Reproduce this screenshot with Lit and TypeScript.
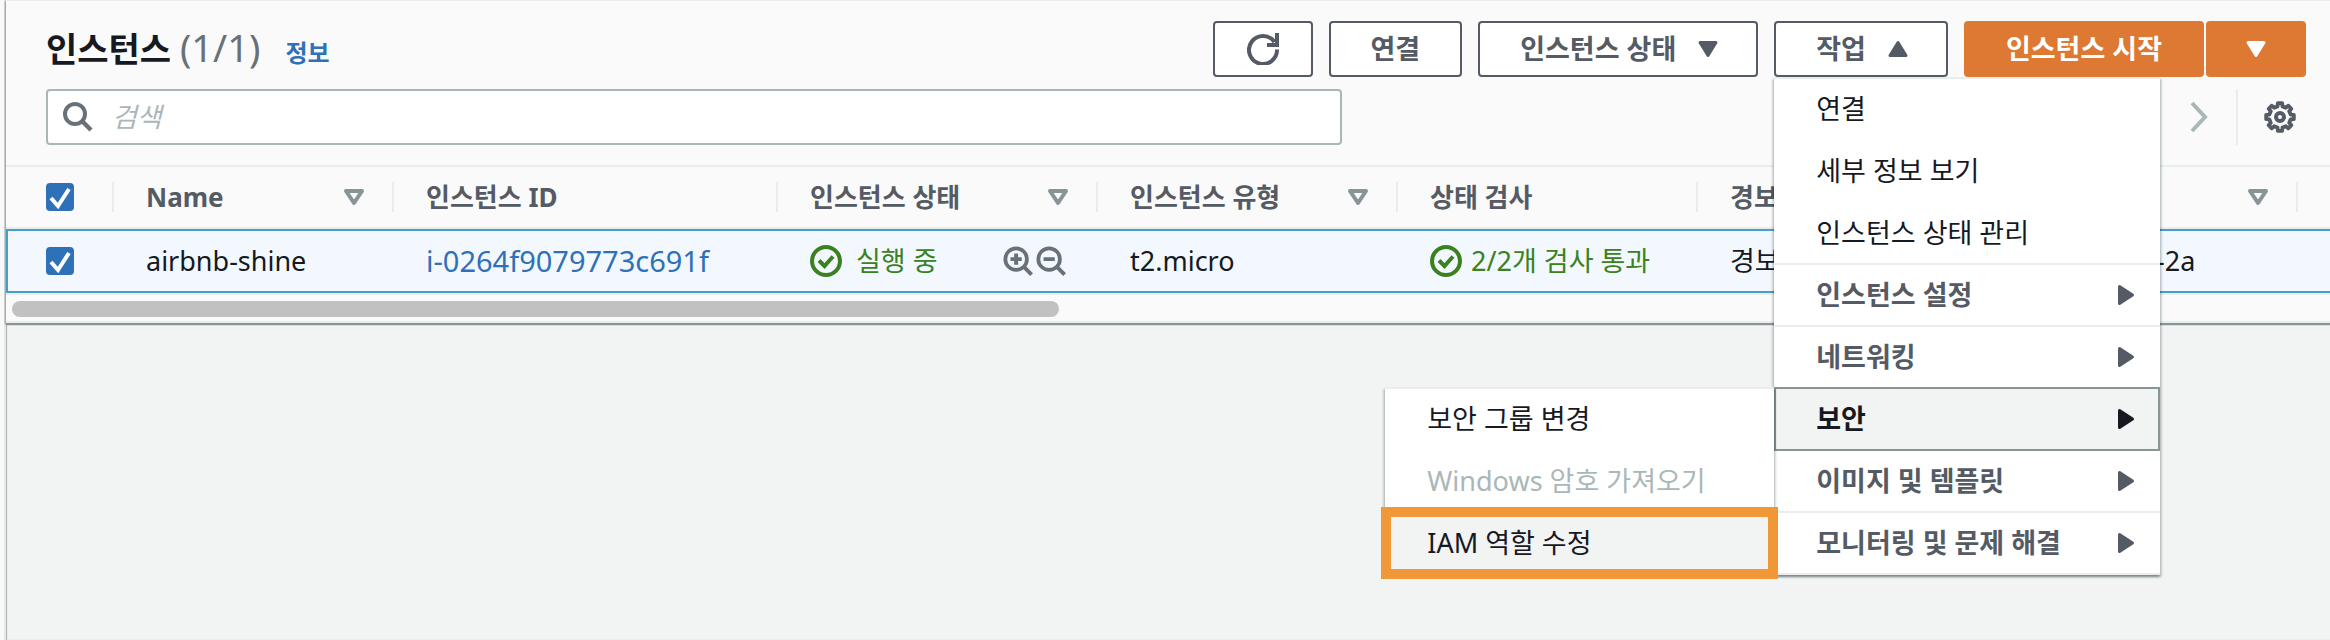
import { LitElement, html, svg, css, nothing } from "lit";
import { customElement, property, state } from "lit/decorators.js";
import { classMap } from "lit/directives/class-map.js";

interface MenuEntry {
  label: string;
  group?: boolean;
  disabled?: boolean;
  hovered?: boolean;
  children?: MenuEntry[];
}

const ACTIONS: MenuEntry[] = [
  { label: "연결" },
  { label: "세부 정보 보기" },
  { label: "인스턴스 상태 관리" },
  { label: "인스턴스 설정", group: true },
  { label: "네트워킹", group: true },
  {
    label: "보안",
    group: true,
    children: [
      { label: "보안 그룹 변경" },
      { label: "Windows 암호 가져오기", disabled: true },
      { label: "IAM 역할 수정", hovered: true },
    ],
  },
  { label: "이미지 및 템플릿", group: true },
  { label: "모니터링 및 문제 해결", group: true },
];

const COLUMNS = [
  { key: "name", label: "Name", sortable: true },
  { key: "id", label: "인스턴스 ID", sortable: false },
  { key: "state", label: "인스턴스 상태", sortable: true },
  { key: "type", label: "인스턴스 유형", sortable: true },
  { key: "check", label: "상태 검사", sortable: false },
  { key: "alarm", label: "경보 상태", sortable: false },
  { key: "zone", label: "가용 영역", sortable: true },
  { key: "dns", label: "", sortable: false },
];

/** Outline of an eight-toothed cog centred on 16,16. */
function cogPath(): string {
  const points: string[] = [];
  for (let i = 0; i < 8; i++) {
    const steps: [number, number][] = [
      [-13, 10.9],
      [-9, 14],
      [9, 14],
      [13, 10.9],
    ];
    for (const [offset, radius] of steps) {
      const a = ((i * 45 + offset - 90) * Math.PI) / 180;
      points.push(`${(16 + radius * Math.cos(a)).toFixed(2)} ${(16 + radius * Math.sin(a)).toFixed(2)}`);
    }
  }
  return `M${points.join("L")}Z`;
}

const icons = {
  refresh: svg`<path d="M30 16.500A14 14 0 1 1 27.500 9" fill="none" stroke="currentColor" stroke-width="4"/><path d="M30 0v12H20" fill="none" stroke="currentColor" stroke-width="4"/>`,
  search: svg`<circle cx="13" cy="13" r="10" fill="none" stroke="currentColor" stroke-width="4"/><path d="M20 20l9 9" stroke="currentColor" stroke-width="4.4"/>`,
  zoomIn: svg`<circle cx="14" cy="14" r="11.5" fill="none" stroke="currentColor" stroke-width="4"/><path d="M22 22l8.500 8.500M8 14h12M14 8v12" stroke="currentColor" stroke-width="4.2"/>`,
  zoomOut: svg`<circle cx="14" cy="14" r="11.500" fill="none" stroke="currentColor" stroke-width="4"/><path d="M22 22l8.500 8.500M8 14h12" stroke="currentColor" stroke-width="4.2"/>`,
  ok: svg`<circle cx="16" cy="16" r="14" fill="none" stroke="currentColor" stroke-width="4"/><path d="M9 15.500l5.500 5.500 8.500-9.500" fill="none" stroke="currentColor" stroke-width="4"/>`,
  next: svg`<path d="M9 2l13 14-13 14" fill="none" stroke="currentColor" stroke-width="4"/>`,
  cog: svg`<path d="${cogPath()}" fill="none" stroke="currentColor" stroke-width="3.8" stroke-linejoin="round"/><circle cx="16" cy="16" r="4" fill="none" stroke="currentColor" stroke-width="4"/>`,
  down: svg`<path d="M8 9.500h16l-8 13z" fill="currentColor" stroke="currentColor" stroke-width="3" stroke-linejoin="round"/>`,
  up: svg`<path d="M8 22.500h16l-8-13z" fill="currentColor" stroke="currentColor" stroke-width="3" stroke-linejoin="round"/>`,
  right: svg`<path d="M9.500 7.500v17l13-8.500z" fill="currentColor" stroke="currentColor" stroke-width="3" stroke-linejoin="round"/>`,
  sort: svg`<path d="M8 10h16l-8 12z" fill="none" stroke="currentColor" stroke-width="4" stroke-linejoin="round"/>`,
  tick: svg`<path d="M5 15l7 8L23 6" fill="none" stroke="#fff" stroke-width="4"/>`,
};

const icon = (shape: unknown, size = "", box = "0 0 32 32") =>
  html`<svg class="icon ${size}" viewBox=${box} aria-hidden="true">${shape}</svg>`;

const base = css`
  :host {
    display: block;
    box-sizing: border-box;
  }
  *,
  *::before,
  *::after {
    box-sizing: border-box;
  }
  .icon {
    display: block;
    flex: none;
    width: 32px;
    height: 32px;
  }
  button {
    font: inherit;
    color: inherit;
    cursor: pointer;
  }
  a {
    color: #2f71b8;
    text-decoration: none;
  }
`;

@customElement("action-menu")
class ActionMenu extends LitElement {
  @property({ attribute: false }) items: MenuEntry[] = [];

  static styles = [
    base,
    css`
      .menu {
        list-style: none;
        margin: 0;
        padding: 0;
        background: #fff;
        box-shadow: 0 2px 2px 0 rgba(0, 28, 36, 0.3), 2px 2px 2px 0 rgba(0, 28, 36, 0.15),
          -2px 2px 2px 0 rgba(0, 28, 36, 0.15);
        border-top: 2px solid #eaeded;
        border-bottom: 2px solid #eaeded;
      }
      .item {
        position: relative;
        height: 64px;
        margin: -2px 0 0;
      }
      .item:last-child {
        margin-bottom: -2px;
      }
      .entry {
        display: flex;
        align-items: center;
        justify-content: space-between;
        width: 100%;
        height: 100%;
        padding: 0 18px 0 42px;
        border: 0 solid #eaeded;
        border-width: 2px 0;
        border-color: transparent;
        background: none;
        color: #16191f;
        font-size: 27px;
        line-height: 40px;
        text-align: left;
        white-space: nowrap;
      }
      .group {
        border-color: #eaeded;
        color: #545b64;
        font-weight: 700;
      }
      .open {
        z-index: 1;
      }
      .open > .entry {
        border: 2px solid #879596;
        padding: 0 16px 0 40px;
        background: #f2f3f3;
        color: #16191f;
      }
      .entry:disabled {
        color: #aab7b8;
      }
      .hovered > .entry {
        background: #f2f3f3;
        outline: 10px solid #f09837;
        outline-offset: -6px;
      }
      .submenu {
        position: absolute;
        top: 0;
        right: 100%;
        width: 389px;
      }
    `,
  ];

  render() {
    return html`<ul class="menu" role="menu">
      ${this.items.map(
        (entry) => html`<li
          class=${classMap({ item: true, open: !!entry.children, hovered: !!entry.hovered })}
          role="none"
        >
          <button
            class=${classMap({ entry: true, group: !!entry.group })}
            role="menuitem"
            type="button"
            ?disabled=${entry.disabled}
          >
            ${entry.label}${entry.group ? icon(icons.right) : nothing}
          </button>
          ${entry.children
            ? html`<action-menu class="submenu" .items=${entry.children}></action-menu>`
            : nothing}
        </li>`
      )}
    </ul>`;
  }
}

@customElement("check-box")
class CheckBox extends LitElement {
  @property() label = "";
  @state() private on = true;

  static styles = [
    base,
    css`
      .box {
        display: grid;
        width: 28px;
        height: 28px;
      }
      .input,
      .icon {
        grid-area: 1 / 1;
        width: 28px;
        height: 28px;
        margin: 0;
      }
      .input {
        appearance: none;
        border: 2px solid #879596;
        border-radius: 4px;
        background: #fff;
      }
      .input:checked {
        border-color: #2f71b8;
        background: #2f71b8;
      }
      .icon {
        pointer-events: none;
      }
    `,
  ];

  render() {
    return html`<label class="box">
      <input
        class="input"
        type="checkbox"
        aria-label=${this.label}
        .checked=${this.on}
        @change=${(e: Event) => (this.on = (e.target as HTMLInputElement).checked)}
      />
      ${this.on ? icon(icons.tick, "", "0 0 28 28") : nothing}
    </label>`;
  }
}

@customElement("app-root")
class AppRoot extends LitElement {
  @state() private menuOpen = true;

  static styles = [
    base,
    css`
      :host {
        min-height: 100vh;
        display: flex;
        overflow: hidden;
        border-left: 4px solid #f9f9f9;
        background: #f2f3f3;
        color: #16191f;
        font-family: "Noto Sans", "Noto Sans CJK KR", sans-serif;
        font-size: 27px;
        line-height: 40px;
      }
      .page {
        flex: 1;
        min-width: 0;
        border-left: 2px solid #e6e8e8;
        box-shadow: inset 1px 0 1px 0 rgba(0, 28, 36, 0.3);
      }
      .panel {
        background: #fafafa;
        border-top: 1px solid #eaeded;
        border-bottom: 2px solid #eaeded;
        box-shadow: 0 2px 1px 0 #879596, -1px 1px 2px 0 rgba(0, 28, 36, 0.4);
      }
      .header {
        display: flex;
        align-items: flex-start;
        justify-content: space-between;
        padding: 20px 24px 0 40px;
      }
      .heading {
        display: flex;
        align-items: baseline;
      }
      .title {
        margin: 0;
        font-size: 34px;
        line-height: 52px;
        font-weight: 700;
      }
      .count {
        color: #687078;
        font-size: 38px;
        font-weight: 400;
      }
      .info {
        margin-left: 25px;
        font-size: 24px;
        font-weight: 700;
      }
      .actions {
        display: flex;
        gap: 16px;
      }
      .button {
        display: flex;
        align-items: center;
        justify-content: center;
        gap: 16px;
        height: 56px;
        min-width: 100px;
        padding: 0 40px;
        border: 2px solid #545b64;
        border-radius: 4px;
        background: #fff;
        color: #545b64;
        font-weight: 700;
        white-space: nowrap;
      }
      .square {
        padding: 0;
      }
      .caret {
        padding-right: 32px;
      }
      .primary {
        border-color: #dd7932;
        background: #dd7932;
        color: #fff;
      }
      .split {
        display: flex;
        gap: 2px;
      }
      .anchor {
        position: relative;
      }
      .dropdown {
        position: absolute;
        z-index: 2;
        top: 100%;
        left: 0;
        width: 386px;
      }
      .tools {
        display: flex;
        align-items: center;
        justify-content: space-between;
        padding: 12px 34px 20px 40px;
      }
      .search {
        display: flex;
        align-items: center;
        flex: 0 1 1296px;
        height: 56px;
        padding: 0 14px;
        gap: 18px;
        border: 2px solid #aab7b8;
        border-radius: 4px;
        background: #fff;
        color: #687078;
      }
      .field {
        flex: 1;
        min-width: 0;
        padding: 0;
        border: 0;
        outline: 0;
        background: none;
        font: inherit;
        color: #16191f;
      }
      .field::placeholder {
        color: #aab7b8;
        font-style: italic;
        opacity: 1;
      }
      .pager {
        display: flex;
        align-items: center;
      }
      .plain {
        padding: 0;
        border: 0;
        background: none;
        color: #545b64;
      }
      .plain.next {
        color: #aab7b8;
      }
      .rule {
        width: 2px;
        height: 56px;
        margin: 0 26px 0 21px;
        background: #eaeded;
      }
      .scroller {
        overflow: hidden;
        border-top: 2px solid #eaeded;
      }
      .table {
        width: 2690px;
        table-layout: fixed;
        border-collapse: separate;
        border-spacing: 0;
      }
      .col-select {
        width: 108px;
      }
      .col-name {
        width: 280px;
      }
      .col-id {
        width: 384px;
      }
      .col-state {
        width: 320px;
      }
      .col-type,
      .col-check {
        width: 300px;
      }
      .col-alarm {
        width: 262px;
      }
      .col-zone {
        width: 338px;
      }
      .head,
      .cell {
        padding: 0 32px;
        text-align: left;
        white-space: nowrap;
        overflow: hidden;
      }
      .head {
        height: 62px;
        padding: 0;
        border-bottom: 2px solid #eaeded;
        color: #545b64;
        font-size: 26px;
        font-weight: 700;
      }
      .head-inner {
        display: flex;
        align-items: center;
        justify-content: space-between;
        height: 30px;
        padding: 0 22px 0 32px;
        border-right: 2px solid #eaeded;
      }
      .head-inner .icon {
        color: #879596;
      }
      .head-inner.select {
        padding-left: 40px;
      }
      .cell {
        height: 64px;
        border: 0 solid #469fca;
        border-width: 2px 0;
        background: #f2f8fd;
      }
      .cell.select {
        border-left-width: 2px;
        padding: 0 0 0 38px;
      }
      .id {
        font-size: 29px;
      }
      .status {
        display: flex;
        align-items: center;
        gap: 9px;
        color: #3a8220;
      }
      .running {
        gap: 14px;
      }
      .filters {
        display: flex;
        gap: 3px;
        margin-left: auto;
        color: #687078;
      }
      .filters .plain {
        color: #687078;
      }
      .small {
        width: 30px;
        height: 30px;
      }
      .track {
        padding: 6px 6px 4px;
        border-top: 2px solid #eaeded;
      }
      .thumb {
        width: 45.3%;
        height: 16px;
        border-radius: 8px;
        background: #c1c1c1;
      }
    `,
  ];

  private renderCell(key: string) {
    switch (key) {
      case "name":
        return "airbnb-shine";
      case "id":
        return html`<a class="id" href="#i-0264f9079773c691f">i-0264f9079773c691f</a>`;
      case "state":
        return html`<div class="status running">
          ${icon(icons.ok)}<span>실행 중</span>
          <span class="filters">
            <button class="plain" type="button" aria-label="필터 포함">${icon(icons.zoomIn, "small")}</button>
            <button class="plain" type="button" aria-label="필터 제외">${icon(icons.zoomOut, "small")}</button>
          </span>
        </div>`;
      case "type":
        return "t2.micro";
      case "check":
        return html`<div class="status">${icon(icons.ok)}<span>2/2개 검사 통과</span></div>`;
      case "alarm":
        return "경보 없음";
      case "zone":
        return "ap-northeast-2a";
      default:
        return "–";
    }
  }

  render() {
    return html`<main class="page"><section class="panel">
      <header class="header">
        <div class="heading">
          <h2 class="title">인스턴스 <span class="count">(1/1)</span></h2>
          <a class="info" href="#info">정보</a>
        </div>
        <div class="actions">
          <button class="button square" type="button" aria-label="새로 고침">${icon(icons.refresh)}</button>
          <button class="button" type="button">연결</button>
          <button class="button caret" type="button">인스턴스 상태 ${icon(icons.down)}</button>
          <div class="anchor">
            <button
              class="button caret"
              type="button"
              aria-expanded=${this.menuOpen}
              @click=${() => (this.menuOpen = !this.menuOpen)}
            >
              작업 ${icon(icons.up)}
            </button>
            ${this.menuOpen ? html`<action-menu class="dropdown" .items=${ACTIONS}></action-menu>` : nothing}
          </div>
          <div class="split">
            <button class="button primary" type="button">인스턴스 시작</button>
            <button class="button primary square" type="button" aria-label="시작 옵션">${icon(icons.down)}</button>
          </div>
        </div>
      </header>
      <div class="tools">
        <label class="search">
          ${icon(icons.search)}
          <input class="field" type="text" placeholder="검색" aria-label="검색" />
        </label>
        <div class="pager">
          <button class="plain next" type="button" aria-label="다음 페이지">${icon(icons.next)}</button>
          <span class="rule"></span>
          <button class="plain" type="button" aria-label="기본 설정">${icon(icons.cog)}</button>
        </div>
      </div>
      <div class="scroller">
        <table class="table">
          <colgroup>
            <col class="col-select" />
            ${COLUMNS.map((c) => html`<col class="col-${c.key}" />`)}
          </colgroup>
          <thead>
            <tr>
              <th class="head">
                <div class="head-inner select"><check-box label="모두 선택"></check-box></div>
              </th>
              ${COLUMNS.map(
                (c) => html`<th class="head" scope="col">
                  <div class="head-inner">${c.label}${c.sortable ? icon(icons.sort) : nothing}</div>
                </th>`
              )}
            </tr>
          </thead>
          <tbody>
            <tr>
              <td class="cell select"><check-box label="airbnb-shine 선택"></check-box></td>
              ${COLUMNS.map((c) => html`<td class="cell">${this.renderCell(c.key)}</td>`)}
            </tr>
          </tbody>
        </table>
        <div class="track"><div class="thumb"></div></div>
      </div>
    </section></main>`;
  }
}
